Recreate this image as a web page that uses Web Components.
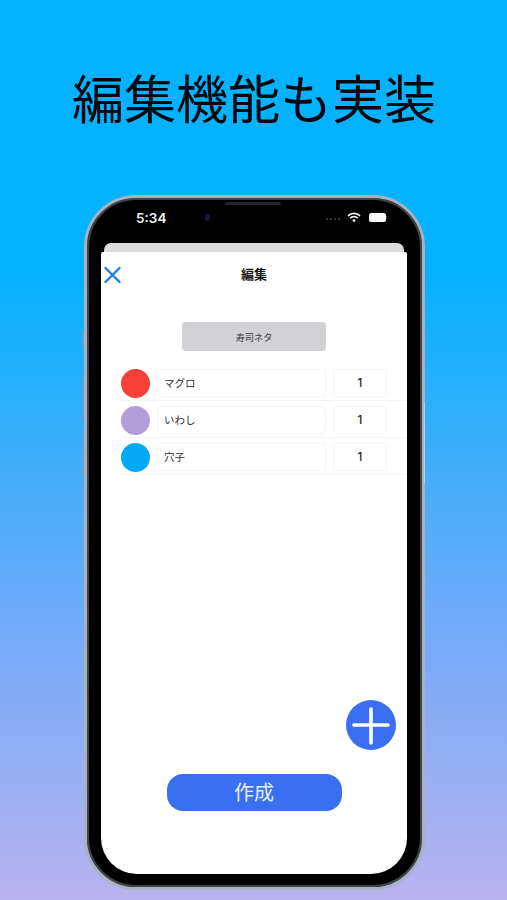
<!DOCTYPE html>
<html lang="ja">
<head>
<meta charset="utf-8">
<title>編集機能も実装</title>
<style>
  html, body { margin: 0; height: 900px; overflow: hidden; }
  body {
    background: linear-gradient(180deg, #04b2fe 0%, #04b2fe 30%, #6eaaf8 68%, #b9b2ef 100%);
    font-family: "Noto Sans CJK JP", "Noto Sans", sans-serif;
  }
</style>
</head>
<body>

<promo-title>編集機能も実装</promo-title>

<phone-frame>
  <status-bar slot="status" time="5:34"></status-bar>
  <edit-sheet heading="編集">
    <section-button>寿司ネタ</section-button>
    <item-row color="#f63f36" name="マグロ" count="1"></item-row>
    <item-row color="#b39ddb" name="いわし" count="1"></item-row>
    <item-row color="#03a9f4" name="穴子" count="1"></item-row>
    <create-button slot="footer">作成</create-button>
    <add-fab slot="footer"></add-fab>
  </edit-sheet>
</phone-frame>

<script>
  // 共通: shadow root にマークアップを入れるだけの土台
  class BaseElement extends HTMLElement {
    constructor() {
      super();
      this.attachShadow({ mode: "open" });
    }
    attr(name, fallback = "") {
      return this.getAttribute(name) || fallback;
    }
  }

  class PromoTitle extends BaseElement {
    connectedCallback() {
      this.shadowRoot.innerHTML = `
        <style>
          :host {
            display: block;
            padding: 66px 0 0 1px;
            height: 61px;
            text-align: center;
            font-size: 52px;
            line-height: 61px;
            color: #04080c;
            white-space: nowrap;
          }
        </style>
        <slot></slot>
      `;
    }
  }

  class PhoneFrame extends BaseElement {
    connectedCallback() {
      this.shadowRoot.innerHTML = `
        <style>
          :host {
            display: flex;
            flex-direction: column;
            box-sizing: border-box;
            position: relative;
            width: 341px;
            height: 695px;
            margin: 68px 0 0 84px;
            padding: 0 15px 13px 14px;
            background: #000;
            border: 3px solid #a9b2bf;
            border-radius: 52px;
            box-shadow: inset 0 0 0 2px #3f4550;
          }
          .key {
            position: absolute;
            width: 1px;
            background: #8f9bad;
          }
          .key.l { left: -4px; }
          .key.r { right: -3px; background: #c5ccd6; }
          .notch {
            position: absolute;
            top: 4px;
            left: 138px;
            width: 56px;
            height: 3px;
            border-radius: 2px;
            background: #23252a;
          }
        </style>
        <span class="key l" style="top:132px;height:20px"></span>
        <span class="key l" style="top:177px;height:43px"></span>
        <span class="key l" style="top:235px;height:44px"></span>
        <span class="key r" style="top:204px;height:81px"></span>
        <span class="notch"></span>
        <slot name="status"></slot>
        <slot></slot>
      `;
    }
  }

  class StatusBar extends BaseElement {
    connectedCallback() {
      this.shadowRoot.innerHTML = `
        <style>
          :host {
            display: flex;
            align-items: center;
            box-sizing: border-box;
            height: 45px;
            padding: 0 20px 6px 35px;
            color: #f2f2f2;
            font: 600 13.5px "Inter", "Liberation Sans", sans-serif;
          }
          .camera {
            width: 5px;
            height: 7px;
            margin-left: 39px;
            border-radius: 50%;
            background: #141a44;
          }
          .dots {
            margin-left: auto;
            display: flex;
            gap: 2px;
          }
          .dots i {
            width: 2px;
            height: 2px;
            margin-top: 3px;
            background: #333;
          }
          svg { display: block; }
          .wifi { margin-left: 7px; }
          .battery { margin-left: 8px; }
        </style>
        <span>${this.attr("time")}</span>
        <span class="camera"></span>
        <span class="dots"><i></i><i></i><i></i><i></i></span>
        <svg class="wifi" width="14" height="11" viewBox="0 0 14 11">
          <path d="M1 3.8a8.6 8.6 0 0 1 12 0" fill="none" stroke="#f4f4f4" stroke-width="1.7"/>
          <path d="M3.2 6.1a5.4 5.4 0 0 1 7.6 0" fill="none" stroke="#f4f4f4" stroke-width="1.7"/>
          <path d="M5.2 8.1a2.5 2.5 0 0 1 3.6 0L7 10.4z" fill="#f4f4f4"/>
        </svg>
        <svg class="battery" width="18" height="9" viewBox="0 0 18 9">
          <rect width="17" height="9" rx="2.6" fill="#f8f8f8"/>
          <rect x="17.2" y="3" width="0.8" height="3" fill="#555"/>
        </svg>
      `;
    }
  }

  class EditSheet extends BaseElement {
    connectedCallback() {
      this.shadowRoot.innerHTML = `
        <style>
          :host {
            display: flex;
            flex-direction: column;
            flex: 1;
            min-height: 0;
          }
          .behind {
            height: 9px;
            margin: 0 3px;
            border-radius: 7px 7px 0 0;
            background: #dcdcde;
          }
          .card {
            display: flex;
            flex-direction: column;
            flex: 1;
            position: relative;
            background: #fff;
            border-radius: 2px 2px 36px 36px;
          }
          header {
            display: grid;
            grid-template-columns: 1fr auto 1fr;
            align-items: center;
            height: 46px;
          }
          h1 {
            margin: 0 0 3px;
            font-size: 13px;
            font-weight: 700;
            color: #1a1a1a;
          }
          header svg { display: block; }
          .body {
            flex: 1;
            display: flex;
            flex-direction: column;
            padding: 24px 0 0 19px;
          }
          .footer {
            display: flex;
            justify-content: center;
            padding-bottom: 63px;
          }
        </style>
        <div class="behind"></div>
        <div class="card">
          <header>
            <svg width="22" height="18" viewBox="0 0 22 18" fill="none" stroke="#1c7ee8" stroke-width="2.4" stroke-linecap="round">
              <path d="M4.5 2l14 14M18.5 2l-14 14"/>
            </svg>
            <h1>${this.attr("heading")}</h1>
          </header>
          <div class="body"><slot></slot></div>
          <div class="footer"><slot name="footer"></slot></div>
        </div>
      `;
    }
  }

  class SectionButton extends BaseElement {
    connectedCallback() {
      this.shadowRoot.innerHTML = `
        <style>
          :host {
            display: flex;
            align-items: center;
            justify-content: center;
            align-self: flex-start;
            width: 144px;
            height: 29px;
            margin: 0 0 18px 62px;
            border-radius: 4px;
            background: #d1d1d6;
            color: #3a3a3c;
            font-size: 9.2px;
          }
        </style>
        <slot></slot>
      `;
    }
  }

  class ItemRow extends BaseElement {
    connectedCallback() {
      this.shadowRoot.innerHTML = `
        <style>
          :host {
            display: flex;
            align-items: flex-start;
            gap: 7px;
            box-sizing: border-box;
            height: 32px;
            margin-bottom: 5px;
            padding-left: 1px;
            border-bottom: 1px solid #f3f3f4;
            color: #2c2c2e;
            font-size: 10.5px;
          }
          .dot {
            width: 29px;
            height: 29px;
            border-radius: 50%;
            background: ${this.attr("color")};
          }
          .field {
            display: flex;
            align-items: center;
            box-sizing: border-box;
            height: 28px;
            border: 1px solid #f4f4f5;
            border-radius: 4px;
          }
          .name { width: 169px; padding: 0 0 2px 6px; }
          .count {
            width: 54px;
            justify-content: center;
            font: 500 11.5px "Inter", "Liberation Sans", sans-serif;
            color: #1c1c1e;
          }
        </style>
        <span class="dot"></span>
        <span class="field name">${this.attr("name")}</span>
        <span class="field count">${this.attr("count")}</span>
      `;
    }
  }

  class CreateButton extends BaseElement {
    connectedCallback() {
      this.shadowRoot.innerHTML = `
        <style>
          :host {
            display: flex;
            align-items: center;
            justify-content: center;
            box-sizing: border-box;
            width: 175px;
            height: 37px;
            padding-bottom: 2px;
            border-radius: 16px;
            background: #3b6ff2;
            color: #e6edfd;
            font-size: 20px;
          }
        </style>
        <slot></slot>
      `;
    }
  }

  class AddFab extends BaseElement {
    connectedCallback() {
      this.shadowRoot.innerHTML = `
        <style>
          :host {
            position: absolute;
            right: 11px;
            bottom: 124px;
            width: 50px;
            height: 50px;
            border-radius: 50%;
            background: #3b6ff2;
          }
          svg { display: block; }
        </style>
        <svg width="50" height="50" viewBox="0 0 50 50" stroke="#fff" stroke-width="3.6" stroke-linecap="round">
          <path d="M25 9v34M8 25h34"/>
        </svg>
      `;
    }
  }

  customElements.define("promo-title", PromoTitle);
  customElements.define("phone-frame", PhoneFrame);
  customElements.define("status-bar", StatusBar);
  customElements.define("edit-sheet", EditSheet);
  customElements.define("section-button", SectionButton);
  customElements.define("item-row", ItemRow);
  customElements.define("create-button", CreateButton);
  customElements.define("add-fab", AddFab);
</script>
</body>
</html>
